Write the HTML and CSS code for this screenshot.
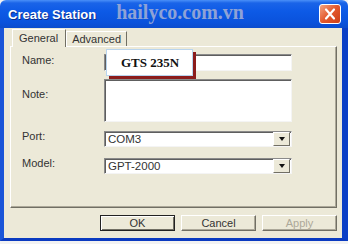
FILE: index.html
```html
<!DOCTYPE html>
<html>
  <head>
    <meta charset="UTF-8" />
    <title>Create Station</title>
    <link rel="stylesheet" href="styles.css">
  </head>
  <body>

    <div class="window">
      <div class="titlebar">
        <span class="title">Create Station</span>
        <span class="watermark">hailyco.com.vn</span>
        <span class="close">
          <svg width="20" height="18" viewBox="0 0 20 18">
            <path d="M6 4.5 L14 13.5 M14 4.5 L6 13.5" stroke="#fff" stroke-width="2.2" stroke-linecap="round" />
          </svg>
        </span>
      </div>

      <div class="frame">
        <div class="tabs">
          <div class="tab active">General</div>
          <div class="tab">Advanced</div>
        </div>

        <div class="panel">
          <div class="form">
            <div class="label">Name:</div>
            <div class="field name">
              <div class="stamp">GTS 235N</div>
            </div>

            <div class="label">Note:</div>
            <div class="field note"></div>

            <div class="label">Port:</div>
            <div class="field select">
              <span class="value">COM3</span>
              <span class="drop"></span>
            </div>

            <div class="label">Model:</div>
            <div class="field select">
              <span class="value">GPT-2000</span>
              <span class="drop"></span>
            </div>
          </div>
        </div>

        <div class="footer">
          <button class="btn default">OK</button>
          <button class="btn">Cancel</button>
          <button class="btn disabled">Apply</button>
        </div>
      </div>
    </div>

  </body>
</html>
```

FILE: styles.css
```css
body {
  margin: 0;
  width: 348px;
  height: 244px;
  background: #f2f2f2;
  font-family: 'Liberation Sans', Arial, sans-serif;
  font-size: 11px;
  color: #222;
  overflow: hidden;
}

.window {
  height: 241px;
  display: flex;
  flex-direction: column;
}

.titlebar {
  height: 28px;
  flex-shrink: 0;
  display: flex;
  align-items: center;
  padding-left: 8px;
  border-radius: 6px 6px 0 0;
  background: linear-gradient(#4a90f8 0, #1a64e8 3px, #0d5ae6 40%, #0a52dc 80%, #0b4ccd 100%);
}

.title {
  color: #fff;
  font-weight: bold;
  font-size: 13px;
  text-shadow: 1px 1px 0 #0a2e8c;
}

.watermark {
  margin-left: 20px;
  margin-top: -4px;
  font-family: 'Liberation Serif', 'Times New Roman', serif;
  font-weight: bold;
  font-size: 20px;
  color: #8ea2d6;
}

.close {
  margin-left: auto;
  margin-right: 7px;
  width: 20px;
  height: 18px;
  border: 1px solid #fff;
  border-radius: 3px;
  background: linear-gradient(135deg, #f4a482, #e3582c 50%, #cc3f18);
  display: flex;
}

.frame {
  flex: 1;
  display: flex;
  flex-direction: column;
  background: #ece9d8;
  border-left: 4px solid #1a55d8;
  border-right: 6px solid #0b3fc6;
  border-bottom: 3px solid #0a3ac0;
  padding: 2px 5px 0 6px;
}

.tabs {
  display: flex;
  height: 16px;
  align-items: flex-end;
  padding-left: 2px;
  position: relative;
  z-index: 1;
}

.tab {
  height: 14px;
  padding: 0 5px;
  line-height: 14px;
  border-top: 1px solid #fff;
  border-left: 1px solid #fff;
  border-right: 1px solid #716f64;
  color: #333;
}

.tab.active {
  height: 17px;
  margin-bottom: -1px;
  padding: 0 7px 0 6px;
  line-height: 16px;
  background: #ece9d8;
}

.panel {
  height: 160px;
  border: 1px solid;
  border-color: #fff #716f64 #716f64 #fff;
  box-shadow: inset -1px -1px 0 #aca899;
}

.form {
  display: grid;
  grid-template-columns: 82px 188px;
  align-items: center;
  padding: 7px 0 0 11px;
}

.label {
  margin-bottom: 5px;
  color: #333;
}

.field {
  background: #fff;
  border: 1px solid;
  border-color: #8a8a8a #f4f4f4 #f4f4f4 #8a8a8a;
  box-shadow: inset 1px 1px 0 #5e5e5e;
  box-sizing: border-box;
}

.field.name {
  height: 17px;
  position: relative;
}

.field.note {
  height: 43px;
  margin-top: 8px;
}

.field.select {
  height: 16px;
  margin-top: 8px;
  display: flex;
  align-items: center;
  justify-content: space-between;
  padding-left: 3px;
  font-size: 11.5px;
}

.field.select + .label + .field.select {
  margin-top: 10px;
}

.field.select + .label {
  margin-top: 10px;
}

.form .label:nth-child(5) {
  margin-top: 8px;
}

.value {
  color: #333;
}

.drop {
  width: 15px;
  height: 12px;
  margin-right: 1px;
  background: #ece9d8;
  border: 1px solid;
  border-color: #fff #716f64 #716f64 #fff;
  display: flex;
  align-items: center;
  justify-content: center;
}

.drop::after {
  content: "";
  border-left: 3.5px solid transparent;
  border-right: 3.5px solid transparent;
  border-top: 4px solid #111;
}

.stamp {
  position: absolute;
  left: 1px;
  top: -6px;
  width: 87px;
  height: 27px;
  box-sizing: border-box;
  background: #fff;
  border: 1px solid #b8d4ee;
  box-shadow: 3px 3px 0 #8b1c1c;
  display: flex;
  align-items: center;
  padding-left: 14px;
  font-family: 'Liberation Serif', 'Times New Roman', serif;
  font-weight: bold;
  font-size: 13px;
  color: #111;
}

.footer {
  display: flex;
  justify-content: flex-end;
  gap: 6px;
  padding-top: 7px;
}

.btn {
  width: 75px;
  height: 16px;
  padding: 0;
  font-family: 'Liberation Sans', Arial, sans-serif;
  font-size: 11px;
  color: #333;
  background: #ece9d8;
  border: 1px solid;
  border-color: #fff #716f64 #716f64 #fff;
  box-shadow: inset -1px -1px 0 #aca899;
}

.btn.default {
  border: 1px solid #222;
  box-shadow: inset 1px 1px 0 #fff, inset -1px -1px 0 #716f64;
}

.btn.disabled {
  color: #aca899;
}
```
